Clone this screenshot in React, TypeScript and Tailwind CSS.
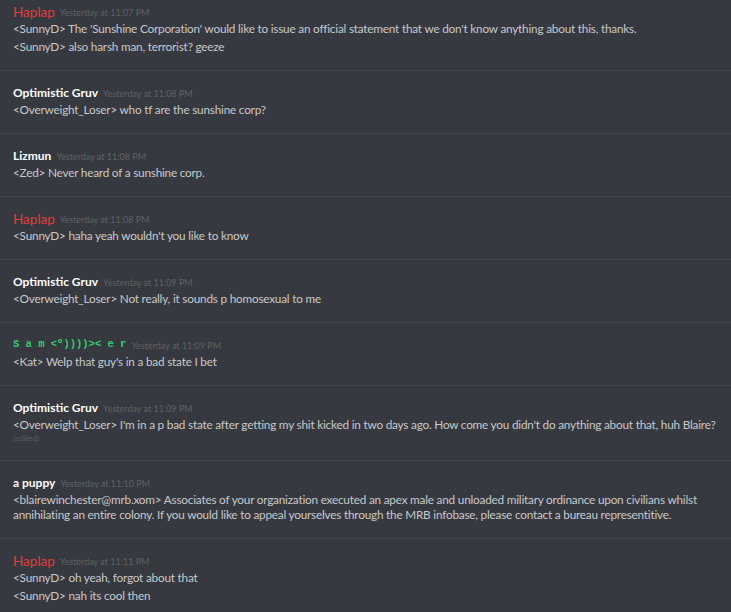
import React from 'react';

type Group = {
  name: string;
  color: string;
  time: string;
  messages: string[];
  edited?: boolean;
  fancy?: boolean;
  role?: boolean;
};

const groups: Group[] = [
  {
    name: 'Haplap',
    color: 'text-[#e03c3c]',
    time: 'Yesterday at 11:07 PM',
    role: true,
    messages: [
      "<SunnyD> The 'Sunshine Corporation' would like to issue an official statement that we don't know anything about this, thanks.",
      '<SunnyD> also harsh man, terrorist? geeze'
    ]
  },
  {
    name: 'Optimistic Gruv',
    color: 'text-white',
    time: 'Yesterday at 11:08 PM',
    messages: ['<Overweight_Loser> who tf are the sunshine corp?']
  },
  {
    name: 'Lizmun',
    color: 'text-white',
    time: 'Yesterday at 11:08 PM',
    messages: ['<Zed> Never heard of a sunshine corp.']
  },
  {
    name: 'Haplap',
    color: 'text-[#e03c3c]',
    time: 'Yesterday at 11:08 PM',
    role: true,
    messages: ["<SunnyD> haha yeah wouldn't you like to know"]
  },
  {
    name: 'Optimistic Gruv',
    color: 'text-white',
    time: 'Yesterday at 11:09 PM',
    messages: ['<Overweight_Loser> Not really, it sounds p homosexual to me']
  },
  {
    name: 'S a m <º))))>< e r',
    color: 'text-[#2ecc71]',
    time: 'Yesterday at 11:09 PM',
    fancy: true,
    messages: ["<Kat> Welp that guy's in a bad state I bet"]
  },
  {
    name: 'Optimistic Gruv',
    color: 'text-white',
    time: 'Yesterday at 11:09 PM',
    edited: true,
    messages: [
      "<Overweight_Loser> I'm in a p bad state after getting my shit kicked in two days ago. How come you didn't do anything about that, huh Blaire?"
    ]
  },
  {
    name: 'a puppy',
    color: 'text-white',
    time: 'Yesterday at 11:10 PM',
    messages: [
      '<blairewinchester@mrb.xom> Associates of your organization executed an apex male and unloaded military ordinance upon civilians whilst annihilating an entire colony. If you would like to appeal yourselves through the MRB infobase, please contact a bureau representitive.'
    ]
  },
  {
    name: 'Haplap',
    color: 'text-[#e03c3c]',
    time: 'Yesterday at 11:11 PM',
    role: true,
    messages: ['<SunnyD> oh yeah, forgot about that', '<SunnyD> nah its cool then']
  }
];

const App = () => {
  return (
    <div className="h-[612px] w-[731px] overflow-hidden bg-[#36393f] font-['Lato',sans-serif]">
      {groups.map((g, i) => (
        <div
          key={i}
          className={
            i === 0
              ? 'pl-[13px] pr-2 pt-[3px] pb-[16px]'
              : 'border-t border-[#42454b] pl-[13px] pr-2 pt-[13px] pb-[16px]'
          }
        >
          <div className="flex h-[18px] items-center gap-[5px]">
            {g.fancy ? (
              <span className={`font-['Liberation_Mono',monospace] text-[10.5px] font-bold ${g.color}`}>
                {g.name}
              </span>
            ) : g.role ? (
              <span className={`text-[13.5px] font-normal ${g.color}`}>{g.name}</span>
            ) : (
              <span className={`text-[12px] font-bold ${g.color}`}>{g.name}</span>
            )}
            <span className="pt-[1px] text-[9px] text-[#5f6166]">{g.time}</span>
          </div>
          {g.messages.map((m, j) => (
            <div
              key={j}
              className={`text-[11.75px] leading-[15px] tracking-[-0.2px] text-[#c8c9cb] ${j > 0 ? 'mt-[3px]' : ''}`}
            >
              {m}
            </div>
          ))}
          {g.edited && (
            <div className="h-[12px] text-[8px] leading-[12px] text-[#5a5c61]">(edited)</div>
          )}
        </div>
      ))}
    </div>
  );
};

export default App;
